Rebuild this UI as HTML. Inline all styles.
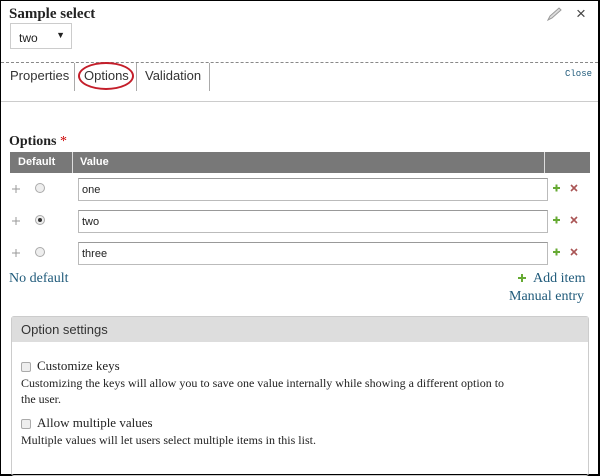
<!DOCTYPE html>
<html><head><style>
*{margin:0;padding:0;box-sizing:border-box}
body{width:600px;height:476px;background:#fff;position:relative;overflow:hidden;font-family:"Liberation Serif",serif;color:#222}
.frame{position:absolute;left:0;top:0;width:600px;height:476px;border:1px solid #000;border-right:2px solid #000;border-bottom:2px solid #000}
.a{position:absolute}
.sans{font-family:"Liberation Sans",sans-serif}
.inp{position:absolute;left:78px;width:470px;height:23px;border:1px solid #bbb;border-top-color:#999;font-family:"Liberation Sans",sans-serif;font-size:11px;padding:5px 3px;}
.link{color:#1f5a7a}
</style></head><body>
<div class="frame"></div>
<div class="a" style="left:9px;top:6px;font-weight:bold;font-size:15px">Sample select</div>
<div class="a sans" style="left:10px;top:23px;width:62px;height:26px;border:1px solid #ccc;font-size:12px;padding:7px 8px">two<span style="position:absolute;right:6px;top:6px;font-size:9px">▼</span></div>
<svg class="a" style="left:545px;top:6px" width="18" height="16"><path d="M3 14 L5 10 L14 2 L16 4 L7 12 Z" fill="#ddd" stroke="#999" stroke-width="1"/></svg>
<div class="a sans" style="left:576px;top:4px;font-size:17px;color:#444">×</div>
<div class="a" style="left:1px;top:62px;width:597px;border-top:1px dashed #888"></div>
<div class="a sans" style="left:10px;top:68px;font-size:13px;color:#333">Properties</div>
<div class="a" style="left:74px;top:63px;height:28px;border-left:1px solid #aaa"></div>
<div class="a sans" style="left:84px;top:68px;font-size:13px;color:#333">Options</div>
<div class="a" style="left:78px;top:62px;width:56px;height:28px;border:2px solid #c41e2a;border-radius:50%"></div>
<div class="a" style="left:136px;top:63px;height:28px;border-left:1px solid #aaa"></div>
<div class="a sans" style="left:145px;top:68px;font-size:13px;color:#333">Validation</div>
<div class="a" style="left:209px;top:63px;height:28px;border-left:1px solid #aaa"></div>
<div class="a link" style="left:565px;top:69px;font-family:'Liberation Mono',monospace;font-size:9px">Close</div>
<div class="a" style="left:1px;top:101px;width:597px;border-top:1px solid #ccc"></div>
<div class="a" style="left:9px;top:134px;font-weight:bold;font-size:14px">Options <span style="color:#c00;font-weight:normal">*</span></div>
<div class="a sans" style="left:10px;top:152px;width:580px;height:21px;background:#787878;color:#fff;font-weight:bold;font-size:11px">
<span class="a" style="left:8px;top:4px">Default</span>
<span class="a" style="left:62px;top:0;height:21px;border-left:1px solid #ddd"></span>
<span class="a" style="left:70px;top:4px">Value</span>
<span class="a" style="left:534px;top:0;height:21px;border-left:1px solid #ddd"></span>
</div>
<div class="inp" style="top:178px">one</div>
<div class="inp" style="top:210px">two</div>
<div class="inp" style="top:242px">three</div>
<div class="a" style="left:10px;top:178px">
<svg width="590" height="90">
<g fill="none" stroke="#999" stroke-width="1">
<path d="M2 11h8M6 7v8"/><path d="M2 43h8M6 39v8"/><path d="M2 75h8M6 71v8"/>
</g>
<g fill="#eee" stroke="#aaa"><circle cx="30" cy="10" r="4.5"/><circle cx="30" cy="42" r="4.5"/><circle cx="30" cy="74" r="4.5"/></g>
<circle cx="30" cy="42" r="2" fill="#333"/>
<g fill="none" stroke="#6a3" stroke-width="2"><path d="M543 10h7M546.5 6.5v7"/><path d="M543 42h7M546.5 38.5v7"/><path d="M543 74h7M546.5 70.5v7"/></g>
<g fill="none" stroke="#a55" stroke-width="1.6"><path d="M561 7l6 6M567 7l-6 6"/><path d="M561 39l6 6M567 39l-6 6"/><path d="M561 71l6 6M567 71l-6 6"/></g>
</svg></div>
<div class="a link" style="left:9px;top:271px;font-size:14px">No default</div>
<svg class="a" style="left:517px;top:273px" width="10" height="10"><path d="M1 5h8M5 1v8" stroke="#6a3" stroke-width="2"/></svg>
<div class="a link" style="left:533px;top:271px;font-size:14px">Add item</div>
<div class="a link" style="left:509px;top:289px;font-size:14px">Manual entry</div>
<div class="a" style="left:11px;top:316px;width:578px;height:160px;border:1px solid #ccc;border-radius:3px">
<div style="height:25px;background:#ddd;font-family:'Liberation Sans',sans-serif;font-size:13px;color:#333;padding:5px 9px">Option settings</div>
<div class="a" style="left:9px;top:45px;width:10px;height:10px;border:1px solid #aaa;border-radius:2px;background:#eee"></div>
<div class="a" style="left:25px;top:41px;font-size:13px">Customize keys</div>
<div class="a" style="left:9px;top:58px;font-size:12px;line-height:16px;white-space:nowrap">Customizing the keys will allow you to save one value internally while showing a different option to<br>the user.</div>
<div class="a" style="left:9px;top:102px;width:10px;height:10px;border:1px solid #aaa;border-radius:2px;background:#eee"></div>
<div class="a" style="left:25px;top:98px;font-size:13px">Allow multiple values</div>
<div class="a" style="left:9px;top:115px;font-size:12px;line-height:16px">Multiple values will let users select multiple items in this list.</div>
</div>
</body></html>
